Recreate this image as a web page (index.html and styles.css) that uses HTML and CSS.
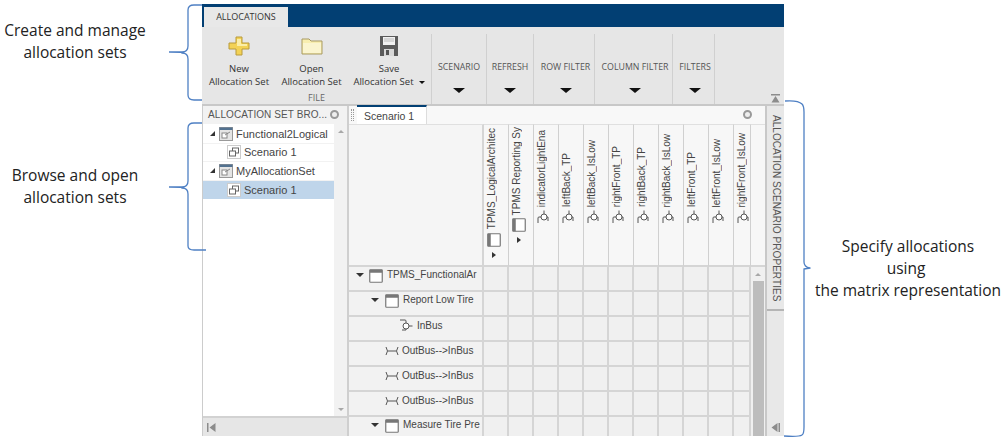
FILE: index.html
```html
<!DOCTYPE html>
<html lang="en">
<head>
<meta charset="utf-8">
<title>Allocation Editor</title>
<link rel="stylesheet" href="styles.css">
</head>
<body>
<svg width="0" height="0" class="defs">
  <defs>
    <symbol id="comp" viewBox="0 0 14 14"><rect x="0.75" y="0.75" width="12.5" height="12.5" rx="0.8" fill="#fff" stroke="#777" stroke-width="1.2"/><rect x="0.75" y="0.75" width="12.5" height="3" fill="#777"/></symbol>
    <symbol id="setico" viewBox="0 0 14 14"><rect x="0.5" y="0.5" width="13" height="13" fill="#e4e4e4" stroke="#999"/><rect x="0.5" y="0.5" width="13" height="2.5" fill="#52718f"/><rect x="3" y="6" width="5" height="5" fill="#fff" stroke="#888"/><path d="M6 8l5-3" stroke="#888" fill="none"/></symbol>
    <symbol id="scen" viewBox="0 0 14 14"><rect x="0.5" y="0.5" width="13" height="13" fill="#fff" stroke="#ccc"/><rect x="5.5" y="3" width="6" height="5" fill="#fff" stroke="#666"/><rect x="2.5" y="6" width="6" height="5" fill="#fff" stroke="#666"/></symbol>
    <symbol id="inport" viewBox="0 0 14 12"><path d="M1 1h5q1 0 1 1v2M7 10v1H3" fill="none" stroke="#555" stroke-width="1"/><circle cx="7" cy="7" r="3" fill="#fff" stroke="#555"/><path d="M10 7h3.500" stroke="#555"/></symbol>
    <symbol id="conn" viewBox="0 0 14 10"><path d="M1 1q3 4 0 8M3 5h8M13 1q-3 4 0 8" fill="none" stroke="#555"/></symbol>
  </defs>
</svg>
<div class="page">
  <aside class="notes-left">
    <p class="note">Create and manage<br>allocation sets</p>
    <p class="note note-second">Browse and open<br>allocation sets</p>
  </aside>

  <main class="app">
    <div class="titlebar"><div class="main-tab">ALLOCATIONS</div></div>
    <div class="ribbon">
      <section class="group group-file">
        <div class="file-buttons">
          <div class="tool tool-new">
            <svg class="tool-icon" viewBox="0 0 22 20"><path d="M8 1h6v6h7v6h-7v6H8v-6H1V7h7z" fill="#f3d255" stroke="#b89a3c"/><path d="M9 3h4v5h6v2H9z" fill="#fbeea8"/></svg>
            <span>New<br>Allocation Set</span>
          </div>
          <div class="tool tool-open">
            <svg class="tool-icon" viewBox="0 0 22 20"><path d="M1 3h7l2 2h11v13H1z" fill="#f8eeb0" stroke="#a89a62"/><path d="M2 7h18v10H2z" fill="#fbf5cf"/></svg>
            <span>Open<br>Allocation Set</span>
          </div>
          <div class="tool tool-save">
            <svg class="tool-icon" viewBox="0 0 22 20"><path d="M2 0h18v20H2z" fill="#5b5b5b"/><path d="M5 1h12v8H5z" fill="#f1f1f1"/><path d="M6 3h10M6 5h10" stroke="#bbb"/><path d="M6 13h10v7H6z" fill="#d8d8d8"/><path d="M8 14h3v5H8z" fill="#555"/></svg>
            <span>Save<br>Allocation Set<i class="mini-caret"></i></span>
          </div>
        </div>
        <div class="group-name">FILE</div>
      </section>
      <section class="group group-scenario"><span>SCENARIO</span><i class="caret"></i></section>
      <section class="group group-refresh"><span>REFRESH</span><i class="caret"></i></section>
      <section class="group group-row"><span>ROW FILTER</span><i class="caret"></i></section>
      <section class="group group-col"><span>COLUMN FILTER</span><i class="caret"></i></section>
      <section class="group group-filters"><span>FILTERS</span><i class="caret"></i></section>
      <div class="ribbon-rest"><svg class="collapse" viewBox="0 0 9 9"><path d="M0 0h9v1.500H0zM4.500 2l4 6.500H.5z" fill="#8c8c8c"/></svg></div>
    </div>

    <div class="workspace">
      <div class="browser">
        <div class="panel-head"><span>ALLOCATION SET BRO...</span><i class="dot"></i></div>
        <div class="tree-wrap">
          <ul class="tree">
            <li class="tree-row"><i class="tw"></i><svg class="ti"><use href="#setico"/></svg>Functional2Logical</li>
            <li class="tree-row child"><svg class="ti"><use href="#scen"/></svg>Scenario 1</li>
            <li class="tree-row"><i class="tw"></i><svg class="ti"><use href="#setico"/></svg>MyAllocationSet</li>
            <li class="tree-row child selected"><svg class="ti"><use href="#scen"/></svg>Scenario 1</li>
          </ul>
          <div class="tree-scroll"><i class="up"></i><i class="down"></i></div>
        </div>
        <div class="browser-foot"><svg class="foot-icon" viewBox="0 0 9 9"><path d="M0 0h1.500v9H0zM8.500 0v9L2.500 4.500z" fill="#8c8c8c"/></svg></div>
      </div>

      <div class="editor">
        <div class="doc-tabs">
          <i class="grip"></i>
          <div class="doc-tab">Scenario 1</div>
          <i class="dot dot-right"></i>
        </div>
        <div class="matrix">
          <div class="corner"></div>
          <div class="ch comp-a"><span class="vt">TPMS_LogicalArchitec</span><svg class="ci-comp"><use href="#comp"/></svg><i class="ch-caret"></i></div>
          <div class="ch comp-b"><span class="vt">TPMS Reporting Sy</span><svg class="ci-comp"><use href="#comp"/></svg><i class="ch-caret"></i></div>
          <div class="ch port"><span class="vt">indicatorLightEna</span><svg class="ci"><use href="#inport"/></svg></div>
          <div class="ch port"><span class="vt">leftBack_TP</span><svg class="ci"><use href="#inport"/></svg></div>
          <div class="ch port"><span class="vt">leftBack_IsLow</span><svg class="ci"><use href="#inport"/></svg></div>
          <div class="ch port"><span class="vt">rightFront_TP</span><svg class="ci"><use href="#inport"/></svg></div>
          <div class="ch port"><span class="vt">rightBack_TP</span><svg class="ci"><use href="#inport"/></svg></div>
          <div class="ch port"><span class="vt">rightBack_IsLow</span><svg class="ci"><use href="#inport"/></svg></div>
          <div class="ch port"><span class="vt">leftFront_TP</span><svg class="ci"><use href="#inport"/></svg></div>
          <div class="ch port"><span class="vt">leftFront_IsLow</span><svg class="ci"><use href="#inport"/></svg></div>
          <div class="ch port"><span class="vt">rightFront_IsLow</span><svg class="ci"><use href="#inport"/></svg></div>
          <div class="ch ch-last"></div>

          <div class="rl lv0"><i class="rc"></i><svg class="ri"><use href="#comp"/></svg><span>TPMS_FunctionalAr</span></div>
          <div class="c"></div><div class="c"></div><div class="c"></div><div class="c"></div><div class="c"></div><div class="c"></div><div class="c"></div><div class="c"></div><div class="c"></div><div class="c"></div><div class="c"></div><div class="c"></div>
          <div class="rl lv1"><i class="rc"></i><svg class="ri"><use href="#comp"/></svg><span>Report Low Tire</span></div>
          <div class="c"></div><div class="c"></div><div class="c"></div><div class="c"></div><div class="c"></div><div class="c"></div><div class="c"></div><div class="c"></div><div class="c"></div><div class="c"></div><div class="c"></div><div class="c"></div>
          <div class="rl lv2"><svg class="rp"><use href="#inport"/></svg><span>InBus</span></div>
          <div class="c"></div><div class="c"></div><div class="c"></div><div class="c"></div><div class="c"></div><div class="c"></div><div class="c"></div><div class="c"></div><div class="c"></div><div class="c"></div><div class="c"></div><div class="c"></div>
          <div class="rl lvc"><svg class="rn"><use href="#conn"/></svg><span>OutBus--&gt;InBus</span></div>
          <div class="c"></div><div class="c"></div><div class="c"></div><div class="c"></div><div class="c"></div><div class="c"></div><div class="c"></div><div class="c"></div><div class="c"></div><div class="c"></div><div class="c"></div><div class="c"></div>
          <div class="rl lvc"><svg class="rn"><use href="#conn"/></svg><span>OutBus--&gt;InBus</span></div>
          <div class="c"></div><div class="c"></div><div class="c"></div><div class="c"></div><div class="c"></div><div class="c"></div><div class="c"></div><div class="c"></div><div class="c"></div><div class="c"></div><div class="c"></div><div class="c"></div>
          <div class="rl lvc"><svg class="rn"><use href="#conn"/></svg><span>OutBus--&gt;InBus</span></div>
          <div class="c"></div><div class="c"></div><div class="c"></div><div class="c"></div><div class="c"></div><div class="c"></div><div class="c"></div><div class="c"></div><div class="c"></div><div class="c"></div><div class="c"></div><div class="c"></div>
          <div class="rl lv1"><i class="rc"></i><svg class="ri"><use href="#comp"/></svg><span>Measure Tire Pre</span></div>
          <div class="c"></div><div class="c"></div><div class="c"></div><div class="c"></div><div class="c"></div><div class="c"></div><div class="c"></div><div class="c"></div><div class="c"></div><div class="c"></div><div class="c"></div><div class="c"></div>
          <div class="matrix-scroll"><i class="up"></i><div class="thumb"></div></div>
        </div>
      </div>

      <div class="side">
        <div class="side-tab">ALLOCATION SCENARIO PROPERTIES</div>
        <div class="side-rest"><svg class="foot-icon" viewBox="0 0 9 9"><path d="M7.500 0H9v9H7.500zM6.500 0v9L.5 4.500z" fill="#8c8c8c"/></svg></div>
      </div>
    </div>
  </main>

  <aside class="notes-right">
    <p class="note">Specify allocations<br><span class="note-using">using</span><br>the matrix representation</p>
  </aside>

  <svg class="braces" viewBox="0 0 1006 440" width="1006" height="440">
    <path d="M202 5h-8q-6 0-6 5v36q0 6-6 6h-13q13 0 13 1 6 0 6 6v36q0 5 6 5h8"/>
    <path d="M202 123h-8q-6 0-6 5v53q0 6-6 6h-13q13 0 13 1 6 0 6 6v52q0 4 6 4h12"/>
    <path d="M785 101q13-1 17 3 2 2 2 8v150q0 5 6 6 1 0-6 1v158q0 7-2 8-3 2-18 1"/>
  </svg>
</div>
</body>
</html>
```

FILE: styles.css
```css
* { box-sizing: border-box; }
html, body { margin: 0; padding: 0; background: #fff; }
body { font-family: "Liberation Sans", Arial, sans-serif; }
.defs { position: absolute; }
ul, p { margin: 0; padding: 0; list-style: none; }
i { display: block; font-style: normal; }

.page { position: relative; display: flex; width: 1006px; height: 440px; overflow: hidden; }
.braces { position: absolute; left: 0; top: 0; pointer-events: none; }
.braces path { fill: none; stroke: #4f80c4; stroke-width: 1.3; }

.note { font-family: "Open Sans", sans-serif; font-size: 15.500px; line-height: 22px; color: #222; text-align: center; }
.notes-left { width: 202px; flex: none; padding-top: 19px; }
.notes-left .note { width: 150px; }
.note-second { margin-top: 101px; }
.notes-right { flex: none; width: 222px; padding: 235px 0 0 30px; }
.notes-right .note { width: 188px; white-space: nowrap; }
.note-using { margin-right: 4px; }

.app { flex: none; width: 582px; height: 432px; margin-top: 4px; display: flex; flex-direction: column; background: #f0f0f0; }
.titlebar { height: 23px; flex: none; background: #023f73; padding: 3px 0 0 2px; }
.main-tab { width: 84px; height: 20px; background: #e8e8e8; font-family: "Open Sans", sans-serif; font-size: 9px; line-height: 20px; text-align: center; color: #333; }

.ribbon { height: 79px; flex: none; display: flex; padding-top: 7px; background: #e6e6e6; border-bottom: 2px solid #c8c8c8; }
.group { flex: none; border-right: 1px solid #d0d0d0; display: flex; flex-direction: column; align-items: center; font-family: "Open Sans", sans-serif; font-size: 8.800px; color: #555; height: 70px; padding-top: 27px; }
.group > span { line-height: 12px; white-space: nowrap; }
.caret { width: 0; height: 0; margin-top: 15px; border: 6px solid transparent; border-top: 5px solid #111; border-bottom: 0; }
.group-file { width: 230px; padding: 0; color: #333; }
.group-scenario { width: 55px; }
.group-refresh { width: 47px; }
.group-row { width: 61px; padding-left: 3px; }
.group-col { width: 78px; padding-left: 3px; }
.group-filters { width: 42px; padding-left: 3px; }
.ribbon-rest { flex: 1; display: flex; justify-content: flex-end; align-items: flex-end; padding: 0 4px 0 0; }
.collapse { width: 9px; height: 9px; margin-bottom: 1px; }

.file-buttons { display: flex; width: 100%; height: 56px; }
.tool { display: flex; flex-direction: column; align-items: center; text-align: center; line-height: 13px; font-size: 9.500px; white-space: nowrap; }
.tool-new { width: 74px; }
.tool-open { width: 71px; }
.tool-save { width: 84px; position: relative; }
.tool-icon { width: 22px; height: 20px; margin: 2px 0 6px; flex: none; }
.mini-caret { display: inline-block; width: 0; height: 0; margin: 0 0 1px 5px; border: 3.500px solid transparent; border-top: 3.500px solid #111; border-bottom: 0; }
.group-name { margin-top: 3px; font-size: 9px; line-height: 12px; color: #666; }

.workspace { flex: 1; min-height: 0; display: flex; }
.browser { flex: none; width: 147px; display: flex; flex-direction: column; border-left: 1px solid #ccc; border-right: 2px solid #cfcfcf; background: #fff; }
.panel-head { height: 18px; flex: none; display: flex; align-items: center; justify-content: space-between; padding: 0 8px 2px 5px; background: #f2f2f2; font-size: 10px; letter-spacing: .08px; color: #555; white-space: nowrap; }
.dot { width: 9px; height: 9px; flex: none; border-radius: 50%; border: 2.500px solid #999; background: #eee; }
.tree-wrap { flex: 1; min-height: 0; display: flex; }
.tree { flex: 1; padding-top: 1px; }
.tree-row { height: 18.500px; display: flex; align-items: center; padding-left: 7px; font-size: 11px; color: #444; border-bottom: 1px solid #f2f2f2; white-space: nowrap; }
.tree-row.child { padding-left: 24px; }
.tree-row.selected { background: #bfd5ea; border-bottom: 0; }
.tw { width: 0; height: 0; margin-right: 4px; border-left: 5px solid transparent; border-bottom: 5px solid #333; }
.ti { width: 14px; height: 14px; margin-right: 3px; flex: none; }
.tree-scroll { width: 13px; flex: none; background: #f2f2f2; display: flex; flex-direction: column; align-items: center; justify-content: space-between; padding: 6px 0 5px; }
.up { width: 0; height: 0; border: 3px solid transparent; border-bottom: 3px solid #a8a8a8; border-top: 0; }
.down { width: 0; height: 0; border: 3px solid transparent; border-top: 3px solid #a8a8a8; border-bottom: 0; }
.browser-foot { height: 20px; flex: none; display: flex; align-items: center; padding-left: 4px; background: #e6e6e6; border-top: 2px solid #d2d2d2; }
.foot-icon { width: 9px; height: 9px; }

.editor { flex: none; width: 416px; display: flex; flex-direction: column; min-height: 0; }
.doc-tabs { height: 18px; flex: none; display: flex; align-items: flex-start; background: #f8f8f8; position: relative; }
.grip { width: 3px; height: 12px; margin: 3px 3px 0 2px; border-left: 1px dotted #999; border-right: 1px dotted #999; }
.doc-tab { position: relative; width: 70px; height: 19px; margin-top: -1px; background: #fff; border-top: 2px solid #023f73; border-right: 1px solid #ddd; padding: 3px 0 0 7px; font-size: 10.500px; color: #444; }
.dot-right { position: absolute; right: 13px; top: 4px; }

.matrix { position: relative; flex: 1; min-height: 0; overflow: hidden; display: grid; grid-template-columns: 135px repeat(10, 25px) 17px 14px; grid-template-rows: 143px repeat(7, 25px); align-content: start; background: #f0f0f0; }
.corner { background: #f5f5f5; border-top: 1px solid #e0e0e0; border-bottom: 2px solid #d5d5d5; border-right: 2px solid #d5d5d5; }
.ch { position: relative; background: #f7f7f7; border-top: 1px solid #e0e0e0; border-right: 1px solid #d0d0d0; border-bottom: 2px solid #d5d5d5; display: flex; flex-direction: column; align-items: flex-start; justify-content: flex-end; padding-left: 1px; }
.vt { writing-mode: vertical-rl; transform: rotate(180deg); font-size: 10px; line-height: 14px; color: #444; white-space: nowrap; }
.ci { position: absolute; left: 2px; bottom: 42px; width: 14px; height: 12px; transform: rotate(-90deg); }
.ci-comp { position: absolute; width: 14px; height: 14px; transform: rotate(-90deg); }
.comp-a { padding: 0 0 36px 1px; }
.comp-a .ci-comp { left: 3px; bottom: 18px; }
.comp-a .ch-caret { left: 8px; bottom: 7px; }
.comp-b { padding: 0 0 50px 1px; }
.comp-b .ci-comp { left: 3px; bottom: 33px; }
.comp-b .ch-caret { left: 8px; bottom: 22px; }
.ch-caret { position: absolute; width: 0; height: 0; border-left: 4px solid #333; border-top: 3px solid transparent; border-bottom: 3px solid transparent; }
.ch.port { padding-bottom: 58px; }
.ch-last { border-right: 0; }

.rl { display: flex; align-items: flex-start; padding-top: 2px; background: #f2f2f2; border-right: 2px solid #d5d5d5; border-bottom: 2px solid #d5d5d5; font-size: 10px; line-height: 13px; color: #444; overflow: hidden; white-space: nowrap; }
.rl span { flex: none; }
.lv0 { padding: 1px 0 0 7px; }
.lv1 { padding: 1px 0 0 22px; }
.lv2 { padding-left: 50px; }
.lvc { padding-left: 36px; }
.rc { width: 0; height: 0; margin: 5px 5px 0 0; border: 4px solid transparent; border-top: 4px solid #333; border-bottom: 0; }
.lv1 .rc { margin-right: 6px; }
.ri { width: 14px; height: 14px; margin: 1px 4px 0 0; flex: none; }
.rp { width: 14px; height: 12px; margin: 0 4px 0 0; flex: none; }
.rn { width: 14px; height: 10px; margin: 2px 3px 0 0; flex: none; }
.c { border-right: 2px solid #d5d5d5; border-bottom: 2px solid #d5d5d5; }
.c:nth-child(13n) { border-right: 0; }
.matrix-scroll { position: absolute; right: 0; top: 143px; bottom: 0; width: 14px; background: #f0f0f0; display: flex; flex-direction: column; align-items: center; padding-top: 6px; }
.thumb { width: 11px; flex: 1; margin-top: 5px; background: #bdbdbd; }

.side { flex: 1; display: flex; flex-direction: column; background: #e8e8e8; border-left: 2px solid #c8c8c8; }
.side-tab { height: 205px; flex: none; writing-mode: vertical-rl; font-size: 10.100px; line-height: 16px; padding: 9px 0 0 0; color: #555; border-bottom: 2px solid #b5b5b5; white-space: nowrap; text-align: left; }
.side-rest { flex: 1; display: flex; align-items: flex-end; justify-content: center; padding-bottom: 4px; }
```
